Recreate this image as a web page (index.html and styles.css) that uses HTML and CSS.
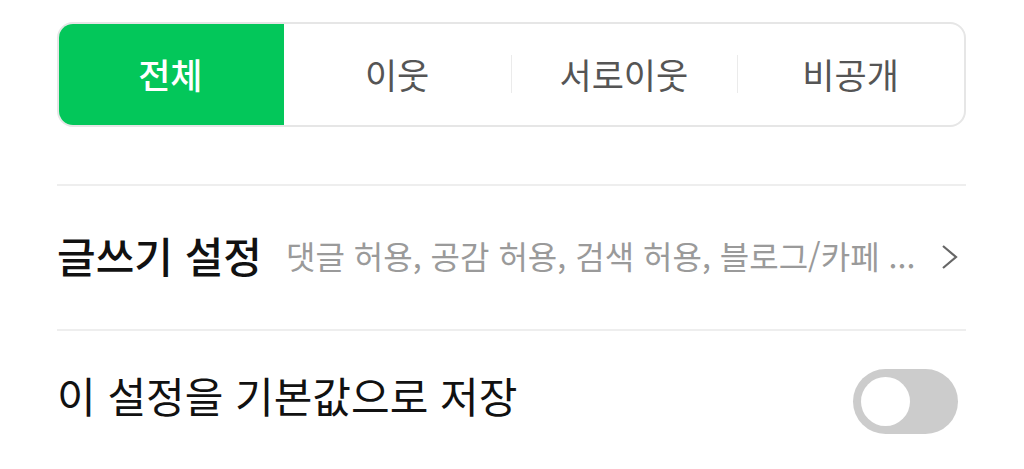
FILE: index.html
```html
<!DOCTYPE html>
<html lang="ko">
<head>
<meta charset="utf-8">
<link rel="stylesheet" href="styles.css">
</head>
<body>
<div class="page">
  <div class="segments">
    <div class="seg active">전체</div>
    <div class="seg">이웃</div>
    <div class="seg sep">서로이웃</div>
    <div class="seg sep">비공개</div>
  </div>
  <div class="row link">
    <span class="row-title">글쓰기 설정</span>
    <span class="row-sub">댓글 허용, 공감 허용, 검색 허용, 블로그/카페 ...</span>
    <svg class="chev" width="20" height="26" viewBox="0 0 20 26"><path d="M3 2 L16 13 L3 24" fill="none" stroke="#666" stroke-width="2.2"/></svg>
  </div>
  <div class="row toggle-row">
    <span class="row-label">이 설정을 기본값으로 저장</span>
    <div class="toggle"><div class="knob"></div></div>
  </div>
</div>
</body>
</html>
```

FILE: styles.css
```css
* { box-sizing: border-box; }
html, body { margin: 0; padding: 0; background: #fff; }
body { font-family: "Noto Sans CJK KR", "Noto Sans", sans-serif; }
.page { width: 1024px; height: 469px; padding: 22px 58px 0 57px; overflow: hidden; }
.segments {
  display: flex; height: 105px;
  border: 2px solid #e6e6e6; border-radius: 16px;
  overflow: hidden;
}
.seg {
  flex: 1; display: flex; align-items: center; justify-content: center;
  font-size: 35px; color: #555; position: relative;
  padding-bottom: 2px;
}
.seg.sep::before {
  content: ""; position: absolute; left: 0; top: 31px; bottom: 32px;
  width: 1px; background: #ebebeb;
}
.seg.active { background: #03c75a; color: #fff; margin: -2px 0 -2px -2px; font-weight: 500; }
.row { display: flex; align-items: center; border-top: 2px solid #eeeeee; }
.link { margin-top: 57px; height: 145px; padding-bottom: 6px; }
.row-title { font-size: 42px; font-weight: 500; color: #111; }
.row-sub { font-size: 32px; color: #9a9a9a; margin-left: 24px; flex: 1; white-space: nowrap; }
.chev { margin-right: 6px; margin-top: 4px; }
.toggle-row { height: 144px; justify-content: space-between; align-items: flex-start; padding-top: 33px; }
.row-label { font-size: 42px; color: #111; }
.toggle { width: 105px; height: 65px; border-radius: 33px; background: #cccccc; position: relative; margin-right: 8px; margin-top: 5px; }
.knob { position: absolute; left: 8px; top: 8px; width: 49px; height: 49px; border-radius: 50%; background: #fff; }
```
